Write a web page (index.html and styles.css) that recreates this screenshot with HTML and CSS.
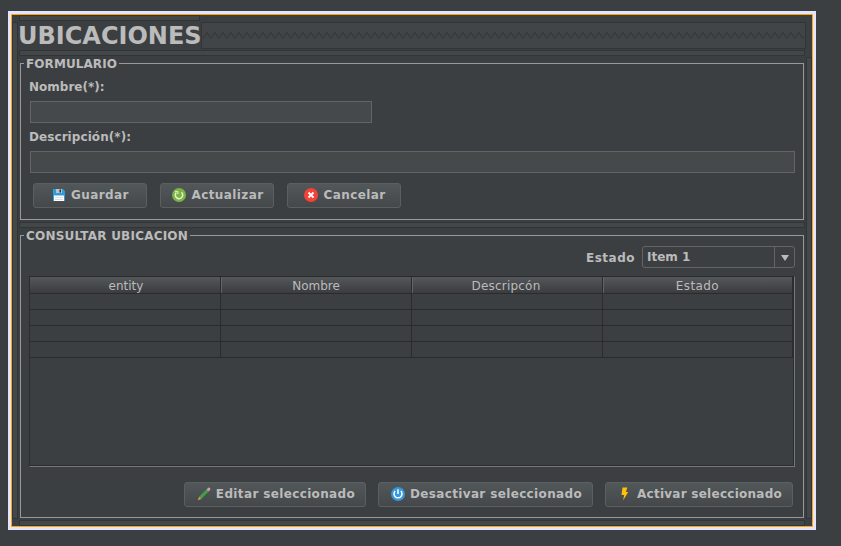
FILE: index.html
```html
<!DOCTYPE html>
<html lang="es">
<head>
<meta charset="utf-8">
<title>Ubicaciones</title>
<link rel="stylesheet" href="styles.css">
</head>
<body>
<main class="window">
  <div class="rail rail-left"></div>
  <div class="content">
    <div class="strip strip-top"></div>
    <header class="heading">
      <h1>UBICACIONES</h1>
      <div class="spring">
        <svg width="603" height="25">
          <defs><pattern id="wave" x="1" y="0" width="8" height="25" patternUnits="userSpaceOnUse"><path d="M0 15.5L4 9.5L8 15.5" fill="none" stroke="#303436"/></pattern></defs>
          <rect x="1" width="601" height="25" fill="url(#wave)"/>
        </svg>
      </div>
    </header>
    <div class="strip"></div>
    <section class="panel form-panel">
      <h2 class="t-form">FORMULARIO</h2>
      <label class="t-nombre" for="nombre">Nombre(*):</label>
      <input class="field short" id="nombre" type="text">
      <label class="t-desc" for="desc">Descripción(*):</label>
      <input class="field" id="desc" type="text">
      <div class="buttons">
        <button class="btn save"><svg width="14" height="14" viewBox="0 0 14 14"><path d="M1 1h10l2 2v10H1z" fill="#2f9be0"/><path d="M4 1h6v4H4z" fill="#b8c4ca"/><path d="M7.5 1.5h1.5v3H7.5z" fill="#263238"/><path d="M2 7.5h10V13H2z" fill="#fff"/><path d="M3 9h8v1H3zM3 11h8v1H3z" fill="#d8dde0"/></svg><span class="t-guardar">Guardar</span></button>
        <button class="btn"><svg width="14" height="14" viewBox="0 0 14 14"><circle cx="7" cy="7" r="7" fill="#7cb342"/><path d="M9.5 4.2A3.7 3.7 0 1 1 4.3 4.4" fill="none" stroke="#e3f2d3" stroke-width="1.5"/><path d="M3 3.4h2.9v2.8" fill="none" stroke="#e3f2d3" stroke-width="1"/></svg><span class="t-actualizar">Actualizar</span></button>
        <button class="btn"><svg width="14" height="14" viewBox="0 0 14 14"><circle cx="7" cy="7" r="7" fill="#f44336"/><path d="M4.5 4.5l5 5M9.5 4.5l-5 5" stroke="#fff" stroke-width="1.8"/></svg><span class="t-cancelar">Cancelar</span></button>
      </div>
    </section>
    <div class="strip strip-middle"></div>
    <section class="panel list-panel">
      <h2 class="t-consultar">CONSULTAR UBICACION</h2>
      <div class="filter">
        <span class="t-estado">Estado</span>
        <div class="combo"><span class="value">Item 1</span><span class="arrow"><svg width="8" height="6"><path d="M0 0h8L4 6z" fill="#bbb"/></svg></span></div>
      </div>
      <div class="scroll">
        <table>
          <colgroup><col class="wide"><col class="wide"><col class="wide"><col></colgroup>
          <thead><tr><th>entity</th><th>Nombre</th><th>Descripcón</th><th>Estado</th></tr></thead>
          <tbody>
            <tr><td></td><td></td><td></td><td></td></tr>
            <tr><td></td><td></td><td></td><td></td></tr>
            <tr><td></td><td></td><td></td><td></td></tr>
            <tr><td></td><td></td><td></td><td></td></tr>
          </tbody>
        </table>
      </div>
      <div class="buttons actions">
        <button class="btn edit"><svg width="14" height="14" viewBox="0 0 14 14"><path d="M2.1 9.7L10 2l2 2-7.7 7.9z" fill="#43a047"/><path d="M10 2l1.2-1.2q1-.5 1.7.2t.3 1.8L12 4z" fill="#e59a9a"/><path d="M9.5 2.5l2 2 .8-.8-2-2z" fill="#9aabb2"/><path d="M2.1 9.7l2.2 2.2L.8 13.2z" fill="#d0a14c"/></svg><span class="t-editar">Editar seleccionado</span></button>
        <button class="btn deactivate"><svg width="14" height="14" viewBox="0 0 14 14"><circle cx="7" cy="7" r="7" fill="#3498db"/><path d="M4.2 4a4 4 0 1 0 5.6 0M7 2.2v4.9" fill="none" stroke="#fff" stroke-width="1.5"/></svg><span class="t-desactivar">Desactivar seleccionado</span></button>
        <button class="btn activate"><svg width="14" height="14" viewBox="0 0 14 14"><path d="M4.5 .5h4.8L7.9 5h2.3L5.1 13.5 6.2 8H3.5z" fill="#ffc107"/></svg><span class="t-activar">Activar seleccionado</span></button>
      </div>
    </section>
    <div class="strip"></div>
  </div>
  <div class="rail rail-right"></div>
</main>
</body>
</html>
```
FILE: styles.css
```css
* { box-sizing: border-box; }
body {
  margin: 0;
  padding: 11px 0 0 8px;
  height: 546px;
  overflow: hidden;
  background: #3c3f41;
  color: #bbb;
  font: bold 12px/14px "DejaVu Sans", sans-serif;
}
.window {
  display: flex;
  width: 808px;
  height: 519px;
  border: 3px solid #e4e4ff;
  outline: 1px solid #ffa500;
  outline-offset: -4px;
  padding: 1px;
}
.rail { width: 6px; border: 1px solid #323537; background: #434748; }
.rail-left { height: 497px; margin-top: 7px; }
.rail-right { height: 462px; margin-top: 42px; }
.content { width: 788px; padding-left: 1px; display: flex; flex-direction: column; }
.strip { width: 786px; height: 6px; flex: none; border: 1px solid #323537; background: #434748; }
.strip-top { width: 181px; }
.strip-middle { margin-top: 2px; }
.heading { display: flex; height: 27px; margin: 1px 0; }
h1, h2 { margin: 0; font-weight: bold; }
h1 { width: 183px; margin-left: -1px; padding-top: 1px; font-size: 24px; line-height: 26px; letter-spacing: 0; white-space: nowrap; }
.spring { width: 605px; border: 1px solid #323537; background: #414547; }
.spring svg { display: block; }
.panel {
  display: flex;
  flex-direction: column;
  width: 784px;
  margin-left: 1px;
  border: 1px solid #999;
  padding: 0 8px;
}
.form-panel { height: 157px; margin-top: 7px; }
.list-panel { height: 283px; margin: 7px 0 2px 1px; }
h2 {
  align-self: flex-start;
  height: 14px;
  margin: -7px 0 -1px -5px;
  padding: 0 2px;
  background: #3c3f41;
  font-size: 12px;
  white-space: nowrap;
}
.form-panel label { height: 14px; align-self: flex-start; margin-top: 10px; }
.field {
  width: 765px;
  height: 22px;
  margin: 7px 0 0 1px;
  padding: 0 4px;
  border: 1px solid #646464;
  border-radius: 0;
  background: #45494a;
  color: #bbb;
}
.field.short { width: 342px; }
.form-panel .t-desc { margin-top: 7px; letter-spacing: .07px; }
.buttons { display: flex; gap: 13px; margin: 10px 0 0 4px; }
.btn {
  display: flex;
  align-items: center;
  justify-content: center;
  gap: 4px;
  width: 114px;
  height: 25px;
  padding: 0 0 0 2px;
  border: 1px solid #5c5f60;
  border-radius: 3px;
  background: linear-gradient(#525759, #44484a);
  color: #bbb;
  font: inherit;
  white-space: nowrap;
}
.btn svg { flex: none; margin-top: -1px; }
.save svg { margin-left: -1px; }
.btn span { margin-left: 1px; }
.buttons .btn span { padding-bottom: 1px; }
.filter { display: flex; justify-content: flex-end; height: 22px; margin-top: 4px; }
.t-estado { margin: 5px 7px 0 0; }
.combo {
  display: flex;
  width: 153px;
  height: 22px;
  border: 1px solid #646464;
  border-radius: 3px;
}
.value { flex: 1; padding: 3px 0 0 4px; }
.arrow { display: flex; align-items: center; justify-content: center; width: 20px; border-left: 1px solid #646464; padding-top: 2px; }
.scroll {
  width: 766px;
  height: 191px;
  margin-top: 8px;
  border: 1px solid #292b2d;
  border-right-color: #777;
  border-bottom-color: #777;
  box-shadow: inset -1px -1px #2b2d2f;
}
table { width: 763px; border-collapse: separate; border-spacing: 0; table-layout: fixed; }
.wide { width: 191px; }
th {
  height: 17px;
  padding: 2px 0 0;
  border-right: 1px solid #292b2d;
  border-bottom: 1px solid #292b2d;
  box-shadow: inset 1px 0 #626566;
  background: linear-gradient(#55585a, #3a3c3f);
  font-weight: normal;
  line-height: 14px;
}
th:first-child { box-shadow: none; padding-left: 2px; }
th:nth-child(3) { padding-right: 2px; letter-spacing: .2px; }
th:last-child { letter-spacing: .4px; }
td { height: 16px; padding: 0; border-right: 1px solid #292b2d; border-bottom: 1px solid #292b2d; }
.actions { gap: 12px; margin: 15px 2px 0 0; justify-content: flex-end; }
.edit { width: 182px; }
.deactivate { width: 215px; }
.activate { width: 188px; }
.t-form { letter-spacing: .08px; }
.t-consultar { letter-spacing: .21px; }
.t-guardar, .t-actualizar, .t-cancelar { letter-spacing: .4px; }
.t-estado { letter-spacing: .5px; }
.value { letter-spacing: 0; }
.t-editar, .t-desactivar { letter-spacing: .36px; }
.t-activar { letter-spacing: .26px; }
```
